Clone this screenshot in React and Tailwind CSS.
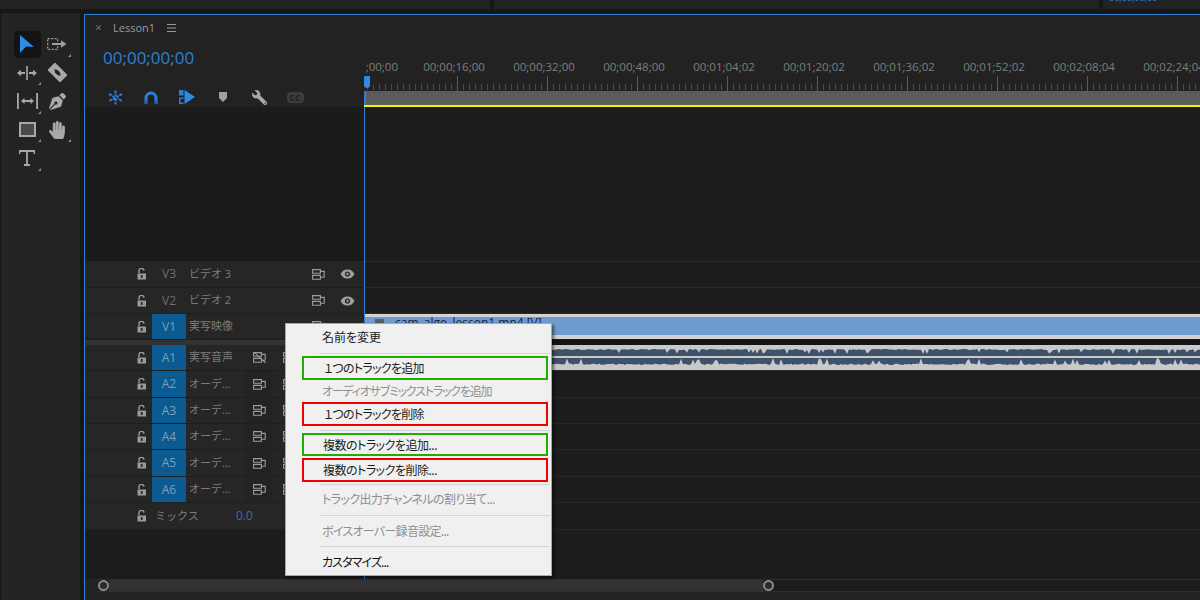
import React from "react";
import { FaHandPaper, FaPenNib, FaWrench } from "react-icons/fa";

const RULER = [";00;00", "00;00;16;00", "00;00;32;00", "00;00;48;00", "00;01;04;02", "00;01;20;02", "00;01;36;02", "00;01;52;02", "00;02;08;04", "00;02;24;04"];

const VIDEO_TRACKS = [
  { id: "V3", name: "ビデオ 3", h: "h-[27px]" },
  { id: "V2", name: "ビデオ 2", h: "h-[26px]" },
  { id: "V1", name: "実写映像", h: "h-[26px]", on: true },
];

const AUDIO_TRACKS = [
  { id: "A1", name: "実写音声", h: "h-[26px]", muted: true },
  { id: "A2", name: "オーデ…", h: "h-[27px]" },
  { id: "A3", name: "オーデ…", h: "h-[26px]" },
  { id: "A4", name: "オーデ…", h: "h-[26px]" },
  { id: "A5", name: "オーデ…", h: "h-[27px]" },
  { id: "A6", name: "オーデ…", h: "h-[26px]" },
];

// small seeded noise so the wave form stays the same on every render
function noise(seed) {
  let s = seed;
  return () => {
    s = (s * 9301 + 49297) % 233280;
    return s / 233280;
  };
}

function wavePath(seed, base, swing, down) {
  const r = noise(seed);
  let d = `M0 ${down ? 23 : 0}`;
  for (let x = 0; x <= 840; x += 2) {
    const a = r();
    const b = r();
    const burst = a > 0.88 ? 0.6 + b * 0.4 : b * 0.2;
    const y = down ? base - burst * swing : base + burst * swing;
    d += `L${x} ${y.toFixed(1)}`;
  }
  return d + `L840 ${down ? 23 : 0}Z`;
}

function LockIcon() {
  return (
    <svg width="10" height="12" viewBox="0 0 10 12" className="shrink-0">
      <path d="M2 5V3a2.5 2.5 0 0 1 5-.4" fill="none" stroke="#9a9a9a" strokeWidth="1.4" />
      <path d="M0.5 5.5h8.5V11.5H0.5z" fill="#9a9a9a" />
      <rect x="3.8" y="7" width="1.8" height="3" fill="#2a2a2a" />
    </svg>
  );
}

function SyncIcon({ muted }) {
  return (
    <svg width="13" height="11" viewBox="0 0 13 11" className="shrink-0">
      <path d="M0.6 0.6h7.800v3.600H0.600zM0.600 6.400h7.800v3.800H0.600zM8.400 2.400h3.800v5.800H8.400" fill="none" stroke="#9c9c9c" strokeWidth="1.100" />
      {muted && <path d="M1 0L12.500 11" stroke="#9c9c9c" strokeWidth="1.100" />}
    </svg>
  );
}

function EyeIcon() {
  return (
    <svg width="15" height="10" viewBox="0 0 15 10" className="shrink-0">
      <path d="M0.5 5C3 1 5.2 0.5 7.5 0.5S12 1 14.5 5C12 9 9.8 9.5 7.5 9.5S3 9 0.5 5Z" fill="#a0a0a0" />
      <circle cx="7.5" cy="5" r="2.6" fill="#262626" />
      <circle cx="7.5" cy="5" r="1.2" fill="#a0a0a0" />
    </svg>
  );
}

function Corner() {
  return <span className="absolute bottom-[2px] right-[1px] w-0 h-0 border-l-[3px] border-l-transparent border-b-[3px] border-b-[#8a8a8a]" />;
}

function ToolPanel() {
  return (
    <div className="w-[79px] ml-px mr-[4px] mt-[4px] bg-[#232323] pt-[17px] pl-[11px] grid grid-cols-[30px_30px] auto-rows-[28.5px] content-start">
      <div className="flex items-center justify-center">
        <div className="w-[27px] h-[27px] rounded-sm bg-[#141414] flex items-center justify-center">
          <svg width="16" height="18" viewBox="0 0 16 18"><path d="M1 0L15 12L7 11.5L1 18Z" fill="#2d8ceb" /></svg>
        </div>
      </div>
      <div className="relative flex items-center justify-center">
        <svg width="20" height="12" viewBox="0 0 20 12">
          <rect x="0.7" y="0.7" width="10" height="10.6" fill="none" stroke="#a0a0a0" strokeWidth="1.2" strokeDasharray="2 1.5" />
          <path d="M5 5h9V2.2L19.5 6L14 9.8V7H5z" fill="#a0a0a0" />
        </svg>
        <Corner />
      </div>
      <div className="relative flex items-center justify-center">
        <svg width="20" height="14" viewBox="0 0 20 14">
          <path d="M9.2 0h1.6v14H9.2zM0 7l4-3.2V6h4v2H4v2.2zM20 7l-4-3.2V6h-4v2h4v2.2z" fill="#a8a8a8" />
        </svg>
        <Corner />
      </div>
      <div className="flex items-center justify-center">
        <svg width="19" height="19" viewBox="0 0 17 17">
          <g transform="rotate(-45 8.5 8.5)">
            <rect x="3.7" y="0.500" width="9.6" height="16" rx="1" fill="#a8a8a8" />
            <path d="M8.500 4.500l1.600 2.500v3l-1.600 2.500-1.600-2.500v-3z" fill="#232323" />
          </g>
        </svg>
      </div>
      <div className="relative flex items-center justify-center">
        <svg width="21" height="16" viewBox="0 0 21 16">
          <path d="M0 0h1.800v16H0zM19.200 0H21v16h-1.800zM4 8l3.500-3v2h6V5L17 8l-3.500 3V9h-6v2z" fill="#a8a8a8" />
        </svg>
        <Corner />
      </div>
      <div className="flex items-center justify-center">
        <FaPenNib size={17} color="#a8a8a8" />
      </div>
      <div className="relative flex items-center justify-center">
        <div className="w-[17px] h-[15px] border-2 border-[#a8a8a8] bg-[#4a4a4a]" />
        <Corner />
      </div>
      <div className="relative flex items-center justify-center">
        <FaHandPaper size={18} color="#a8a8a8" />
        <Corner />
      </div>
      <div className="relative flex items-center justify-center">
        <svg width="16" height="16" viewBox="0 0 16 16">
          <path d="M0.500 4V1h15v3M8 1v14M5 15h6" fill="none" stroke="#a8a8a8" strokeWidth="1.800" />
        </svg>
        <Corner />
      </div>
    </div>
  );
}

function HeaderIcons() {
  return (
    <div className="mt-[12px] h-[20px] pl-[12px] flex items-center">
      <div className="w-[36px] flex justify-center">
        <svg width="15" height="15" viewBox="0 0 15 15">
          <path d="M7.500 0.500v14M1 4l13 7M14 4L1 11" stroke="#2d7fd1" strokeWidth="2" strokeDasharray="3 0.800" />
          <path d="M3 1l10 13" stroke="#222222" strokeWidth="1" />
        </svg>
      </div>
      <div className="w-[36px] flex justify-center">
        <svg width="14" height="13" viewBox="0 0 14 13">
          <path d="M2 13V7a5 5 0 0 1 10 0v6" fill="none" stroke="#2d7fd1" strokeWidth="3" />
          <path d="M0.500 10h3v3h-3zM10.500 10h3v3h-3z" fill="#1c5fa3" />
        </svg>
      </div>
      <div className="w-[36px] flex justify-center">
        <svg width="16" height="14" viewBox="0 0 16 14">
          <path d="M0 0h4.500v5.500H0zM0 7.500h4.500V9H1.500v3.500h3V14H0z" fill="#2d7fd1" />
          <path d="M5.500 0L16 7L5.500 14Z" fill="#2d8ceb" />
        </svg>
      </div>
      <div className="w-[36px] flex justify-center">
        <svg width="8" height="10" viewBox="0 0 8 10"><path d="M0 0h8v6L4 10L0 6Z" fill="#a0a0a0" /></svg>
      </div>
      <div className="w-[36px] flex justify-center">
        <FaWrench size={15} color="#a8a8a8" className="-scale-x-100" />
      </div>
      <div className="w-[36px] flex justify-center">
        <span className="w-[17px] h-[11px] rounded-sm bg-[#3c3c3c] text-[9px] leading-[11px] font-bold text-center text-[#222222]">CC</span>
      </div>
    </div>
  );
}

function Ruler() {
  const ticks = [];
  for (let x = 3; x < 840; x += 6) ticks.push(x);
  return (
    <svg width="835" height="15" className="block">
      {ticks.map((x) => {
        const major = (x - 3) % 90 === 0 && x > 3;
        return <rect key={x} x={x} y={major ? 0 : 8} width="1" height={major ? 15 : 6} fill={major ? "#5c5c5c" : "#4c4c4c"} />;
      })}
    </svg>
  );
}

function TrackHead({ track, audio }) {
  return (
    <div className={`${track.h} flex items-center border-b border-[#1e1e1e] bg-[#262626] pl-[52px]`}>
      <LockIcon />
      <div className={`ml-[5px] w-[34px] h-full flex items-center justify-center text-[12px] ${audio || track.on ? "bg-[#0b5a92] text-[#7fa0b8]" : "text-[#6f6f6f]"}`}>{track.id}</div>
      <div className="ml-[3px] w-[56px] truncate text-[11px] text-[#7c7c7c]">{track.name}</div>
      {audio ? (
        <>
          <div className={`w-[28px] h-full flex items-center justify-center ${track.muted ? "" : "bg-[#232323]"}`}><SyncIcon muted={track.muted} /></div>
          <div className="ml-[10px]"><SyncIcon /></div>
        </>
      ) : (
        <div className="ml-[67px] flex items-center gap-[15px]">
          <SyncIcon />
          {!track.on && <EyeIcon />}
        </div>
      )}
    </div>
  );
}

function TrackArea() {
  return (
    <div className="flex-1 min-w-0 border-l border-[#2f7fd6] overflow-hidden flex flex-col">
      <div className="h-[154px] shrink-0" />
      <div className="h-[27px] border-y border-[#2a2a2a]" />
      <div className="h-[26px] border-b border-[#2a2a2a]" />
      <div className="h-[26px] border-b border-[#1c1c1c] flex flex-col">
        <div className="h-[25px] bg-[#d2d2d2] pt-[3px]">
          <div className="h-[18px] bg-[#6f9bcf] flex items-start pl-[10px] text-[12px] text-[#16233a] leading-[12px] whitespace-nowrap">
            <span className="w-[9px] h-[8px] mt-[2px] bg-[#55606c] mr-[11px]" />
            <span>cam_algo_lesson1.mp4 [V]</span>
          </div>
        </div>
      </div>
      <div className="h-[5px] bg-[#141414]" />
      <div className="h-[26px] border-b border-[#2a2a2a]">
        <svg width="835" height="25" viewBox="0 0 835 25" className="block bg-[#c9c9c9]">
          <rect y="3" width="835" height="8" fill="#3f526b" />
          <rect y="13" width="835" height="8" fill="#3f526b" />
          <path d={wavePath(17, 4, 5, false)} fill="#c9c9c9" />
          <path d={wavePath(41, 20, 7, true)} fill="#c9c9c9" />
        </svg>
      </div>
      <div className="h-[27px] border-b border-[#262626]" />
      <div className="h-[26px] border-b border-[#262626]" />
      <div className="h-[26px] border-b border-[#262626]" />
      <div className="h-[27px] border-b border-[#262626]" />
      <div className="h-[26px] border-b border-[#262626]" />
      <div className="h-[27px] border-b border-[#262626]" />
    </div>
  );
}

function MenuItem({ className = "", children }) {
  return <div className={`flex items-center whitespace-nowrap ${className}`}>{children}</div>;
}

function MenuSep({ className = "" }) {
  return <div className={`h-px ml-[33px] w-[231px] bg-[#d4d4d4] ${className}`} />;
}

function ContextMenu() {
  const plain = "h-[22px] pl-[36px] text-[#1c1c1c]";
  const off = "h-[22px] pl-[36px] text-[#8f8f8f]";
  const boxed = "ml-[16px] w-[246px] border-2 text-[#1c1c1c]";
  return (
    <div className="absolute left-[285px] top-[323px] w-[267px] h-[253px] bg-[#f0f0f0] border border-[#a8a8a8] shadow-[2px_2px_3px_rgba(0,0,0,0.5)] pt-[2px] text-[12px] font-['Noto_Sans_CJK_JP',sans-serif] [font-feature-settings:'palt']">
      <MenuItem className={plain}>名前を変更</MenuItem>
      <MenuSep className="mt-[5px]" />
      <MenuItem className={`${boxed} mt-[2px] h-[24px] border-[#1fae00] pl-[20px] tracking-[-0.7px]`}>１つのトラックを追加</MenuItem>
      <MenuItem className={`${off} tracking-[-1.2px]`}>オーディオサブミックストラックを追加</MenuItem>
      <MenuItem className={`${boxed} h-[24px] border-[#f00000] pl-[20px] tracking-[-0.7px]`}>１つのトラックを削除</MenuItem>
      <MenuSep className="mt-[4px]" />
      <MenuItem className={`${boxed} mt-[2px] h-[23px] border-[#1fae00] pl-[19px] tracking-[-0.5px]`}>複数のトラックを追加...</MenuItem>
      <MenuItem className={`${boxed} mt-[2px] h-[24px] border-[#f00000] pl-[19px] tracking-[-0.5px]`}>複数のトラックを削除...</MenuItem>
      <MenuSep className="mt-[2px]" />
      <MenuItem className={`${off} mt-[3px] tracking-[-0.6px]`}>トラック出力チャンネルの割り当て...</MenuItem>
      <MenuSep className="mt-[5px]" />
      <MenuItem className={`${off} mt-[4px] tracking-[-0.7px]`}>ボイスオーバー録音設定...</MenuItem>
      <MenuSep className="mt-[4px]" />
      <MenuItem className={`${plain} mt-[4px] text-[#111111] tracking-[-0.9px]`}>カスタマイズ...</MenuItem>
    </div>
  );
}

export default function App() {
  return (
    <div className="relative w-[1200px] h-[600px] overflow-hidden flex flex-col bg-[#171717] font-['Open_Sans','Noto_Sans_CJK_JP',sans-serif]">
      <div className="h-[9px] shrink-0 flex gap-[4px] overflow-hidden">
        <div className="w-[490px] bg-[#232323]" />
        <div className="w-[605px] bg-[#232323]" />
        <div className="flex-1 bg-[#232323] pl-[6px] text-[9px] leading-none text-[#2d7fd1]">
          <span className="block -mt-[7px]">00;00;00;00</span>
        </div>
      </div>
      <div className="flex-1 min-h-0 flex">
        <ToolPanel />
        <div className="flex-1 min-w-0 mt-[5px] border-l border-t border-[#2f7fd6] flex flex-col bg-[#1c1c1c]">
          <div className="h-[92px] shrink-0 flex bg-[#222222]">
            <div className="w-[279px] shrink-0">
              <div className="h-[26px] flex items-center pl-[10px] text-[#9a9a9a]">
                <span className="w-[18px] text-[12px] leading-none text-[#7c7c7c]">×</span>
                <span className="text-[11px]">Lesson1</span>
                <svg width="9" height="8" viewBox="0 0 9 8" className="ml-[12px]"><path d="M0 0.500h9M0 4h9M0 7.500h9" stroke="#9a9a9a" /></svg>
              </div>
              <div className="h-[34px] flex items-center pl-[18px] text-[17px] text-[#2d7fd1]">00;00;00;00</div>
              <HeaderIcons />
            </div>
            <div className="relative flex-1 min-w-0 overflow-hidden flex flex-col">
              <div className="h-[45px] shrink-0" />
              <div className="h-[14px] flex -ml-[45px] text-[11.5px] leading-[14px] text-[#7f7f7f]">
                {RULER.map((t, i) => (
                  <span key={t} className={`w-[90px] shrink-0 whitespace-nowrap ${i === 0 ? "text-right pr-[11px]" : "text-center"}`}>{t}</span>
                ))}
              </div>
              <div className="h-[2px]" />
              <Ruler />
              <div className="h-[14px] bg-[#5c5c5c] border-l-[2px] border-[#2f7fd6]" />
              <div className="h-[2px] bg-[#f5f000]" />
              <span className="absolute left-0 top-[61px] w-[6px] h-[12px] bg-[#2f8ae8] rounded-t-[1px] rounded-b-[3px]" />
            </div>
          </div>

          <div className="flex-1 min-h-0 flex">
            <div className="w-[279px] shrink-0 flex flex-col">
              <div className="h-[154px] shrink-0 bg-[#1b1b1b]" />
              {VIDEO_TRACKS.map((t) => <TrackHead key={t.id} track={t} />)}
              <div className="h-[5px] bg-[#333333]" />
              {AUDIO_TRACKS.map((t) => <TrackHead key={t.id} track={t} audio />)}
              <div className="h-[27px] flex items-center bg-[#262626] border-b border-[#1e1e1e] pl-[52px]">
                <LockIcon />
                <span className="ml-[8px] w-[81px] text-[11px] text-[#7c7c7c]">ミックス</span>
                <span className="text-[12px] text-[#2d6fb8]">0.0</span>
              </div>
            </div>
            <TrackArea />
          </div>

          <div className="h-[21px] shrink-0 bg-[#232323] pl-[13px]">
            <div className="h-[13px] border-y border-[#2e2e2e] bg-[#1c1c1c] flex items-center">
              <span className="w-[11px] h-[11px] shrink-0 rounded-full border-2 border-[#8a8a8a] bg-[#2a2a2a]" />
              <div className="w-[654px] h-full bg-[#333333]" />
              <span className="w-[11px] h-[11px] shrink-0 rounded-full border-2 border-[#8a8a8a] bg-[#2a2a2a]" />
            </div>
          </div>
        </div>
      </div>
      <ContextMenu />
    </div>
  );
}
